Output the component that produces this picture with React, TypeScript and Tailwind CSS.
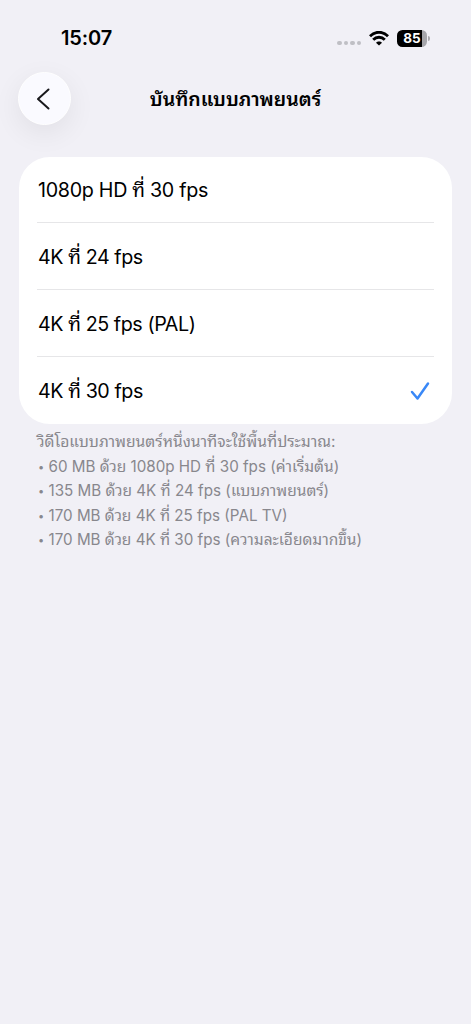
import React from "react";

const rows: { label: string; selected?: boolean }[] = [
  { label: "1080p HD ที่ 30 fps" },
  { label: "4K ที่ 24 fps" },
  { label: "4K ที่ 25 fps (PAL)" },
  { label: "4K ที่ 30 fps", selected: true },
];

const notes = [
  "60 MB ด้วย 1080p HD ที่ 30 fps (ค่าเริ่มต้น)",
  "135 MB ด้วย 4K ที่ 24 fps (แบบภาพยนตร์)",
  "170 MB ด้วย 4K ที่ 25 fps (PAL TV)",
  "170 MB ด้วย 4K ที่ 30 fps (ความละเอียดมากขึ้น)",
];

function Mixed({ text, thai }: { text: string; thai: string }) {
  return (
    <>
      {text.split(/([\u0E00-\u0E7F]+)/).map((part, i) =>
        i % 2 ? <span key={i} className={thai}>{part}</span> : part,
      )}
    </>
  );
}

function StatusBar() {
  return (
    <div className="flex h-[72px] items-start justify-between pl-[61px] pr-[41px] pt-[26px]">
      <div className="text-[20px] font-semibold leading-6 tracking-[-0.1px]">15:07</div>
      <div className="flex h-6 items-center">
        <div className="mt-[10px] flex gap-[2px]">
          {[0, 1, 2, 3].map((i) => (
            <span key={i} className="size-[4.4px] rounded-full bg-[#bfbfc4]" />
          ))}
        </div>
        <svg className="ml-[8px]" width="20" height="15" viewBox="0 0 20 15" fill="none" stroke="#000" strokeWidth="2.8">
          <path d="M1 5.2C6-.1 14-.1 19 5.2" />
          <path d="M4.2 8.8C7.4 5.4 12.6 5.4 15.8 8.8" />
          <path d="M10 14.6L7 11.8C8.5 10.1 11.5 10.1 13 11.8Z" fill="#000" stroke="none" />
        </svg>
        <div className="ml-[8px] flex h-[17px] w-[30px] items-center justify-center overflow-hidden rounded-[5.5px] bg-[linear-gradient(90deg,#000_85%,#a5a5aa_85%)] pt-px text-[13.5px] font-bold leading-none text-white">
          85
        </div>
        <span className="ml-px h-[5px] w-[2px] rounded-r-full bg-[#a9a9ae]" />
      </div>
    </div>
  );
}

export default function App() {
  return (
    <div className="h-[1024px] w-full overflow-hidden bg-[#f1f0f6] font-[Inter,Thonburi,'Noto_Sans_Thai_Looped',Loma,Waree,Garuda,'Noto_Sans',sans-serif] text-black">
      <StatusBar />
      <header className="grid h-[53px] grid-cols-[53px_1fr_53px] items-center px-[18px]">
        <button className="flex size-[53px] items-center justify-center rounded-full border border-white bg-[#fafaff] shadow-[0_8px_28px_rgba(0,0,0,0.07)]">
          <svg width="14" height="24" viewBox="0 0 14 24" fill="none" stroke="#18181c" strokeWidth="2" strokeLinecap="round" strokeLinejoin="round" className="mr-[3px]">
            <path d="M12.5 2.5L2 12L12.5 21.5" />
          </svg>
        </button>
        <h1 className="whitespace-nowrap text-center text-[19.5px] font-semibold leading-8">บันทึกแบบภาพยนตร์</h1>
      </header>
      <main className="mt-[32px] px-[19px]">
        <ul className="rounded-[31px] bg-white px-[18px]">
          {rows.map((row, i) => (
            <li
              key={row.label}
              className={`flex items-center justify-between whitespace-nowrap text-[19.7px] leading-7 ${i === 0 ? "h-[66px] tracking-[-0.3px]" : "h-[67px] tracking-[-0.43px]"} ${i < rows.length - 1 ? "border-b border-[#e6e6e8]" : ""}`}
            >
              <span className={i === 0 ? "pl-px pt-px" : i < 3 ? "pl-px pt-[2px]" : "pl-px"}>
                <Mixed text={row.label} thai="text-[19.5px]" />
              </span>
              {row.selected && (
                <svg className="mr-[4px]" width="20" height="20" viewBox="0 0 20 20" fill="none" stroke="#3988f7" strokeWidth="2.5" strokeLinecap="round" strokeLinejoin="round">
                  <path d="M2 11L7.5 17.5L18 2.5" />
                </svg>
              )}
            </li>
          ))}
        </ul>
        <div className="pl-[18px] pt-[6px] text-[15.2px] leading-[24.6px] text-[#88878d]">
          <p className="h-[24.6px] whitespace-nowrap text-[15.6px]">วิดีโอแบบภาพยนตร์หนึ่งนาทีจะใช้พื้นที่ประมาณ:</p>
          {notes.map((note) => (
            <p key={note} className="flex h-[24.6px] whitespace-nowrap">
              <span className="w-[11.5px] pl-px text-[11px]">•</span>
              <span><Mixed text={note} thai="text-[15.5px]" /></span>
            </p>
          ))}
        </div>
      </main>
    </div>
  );
}
